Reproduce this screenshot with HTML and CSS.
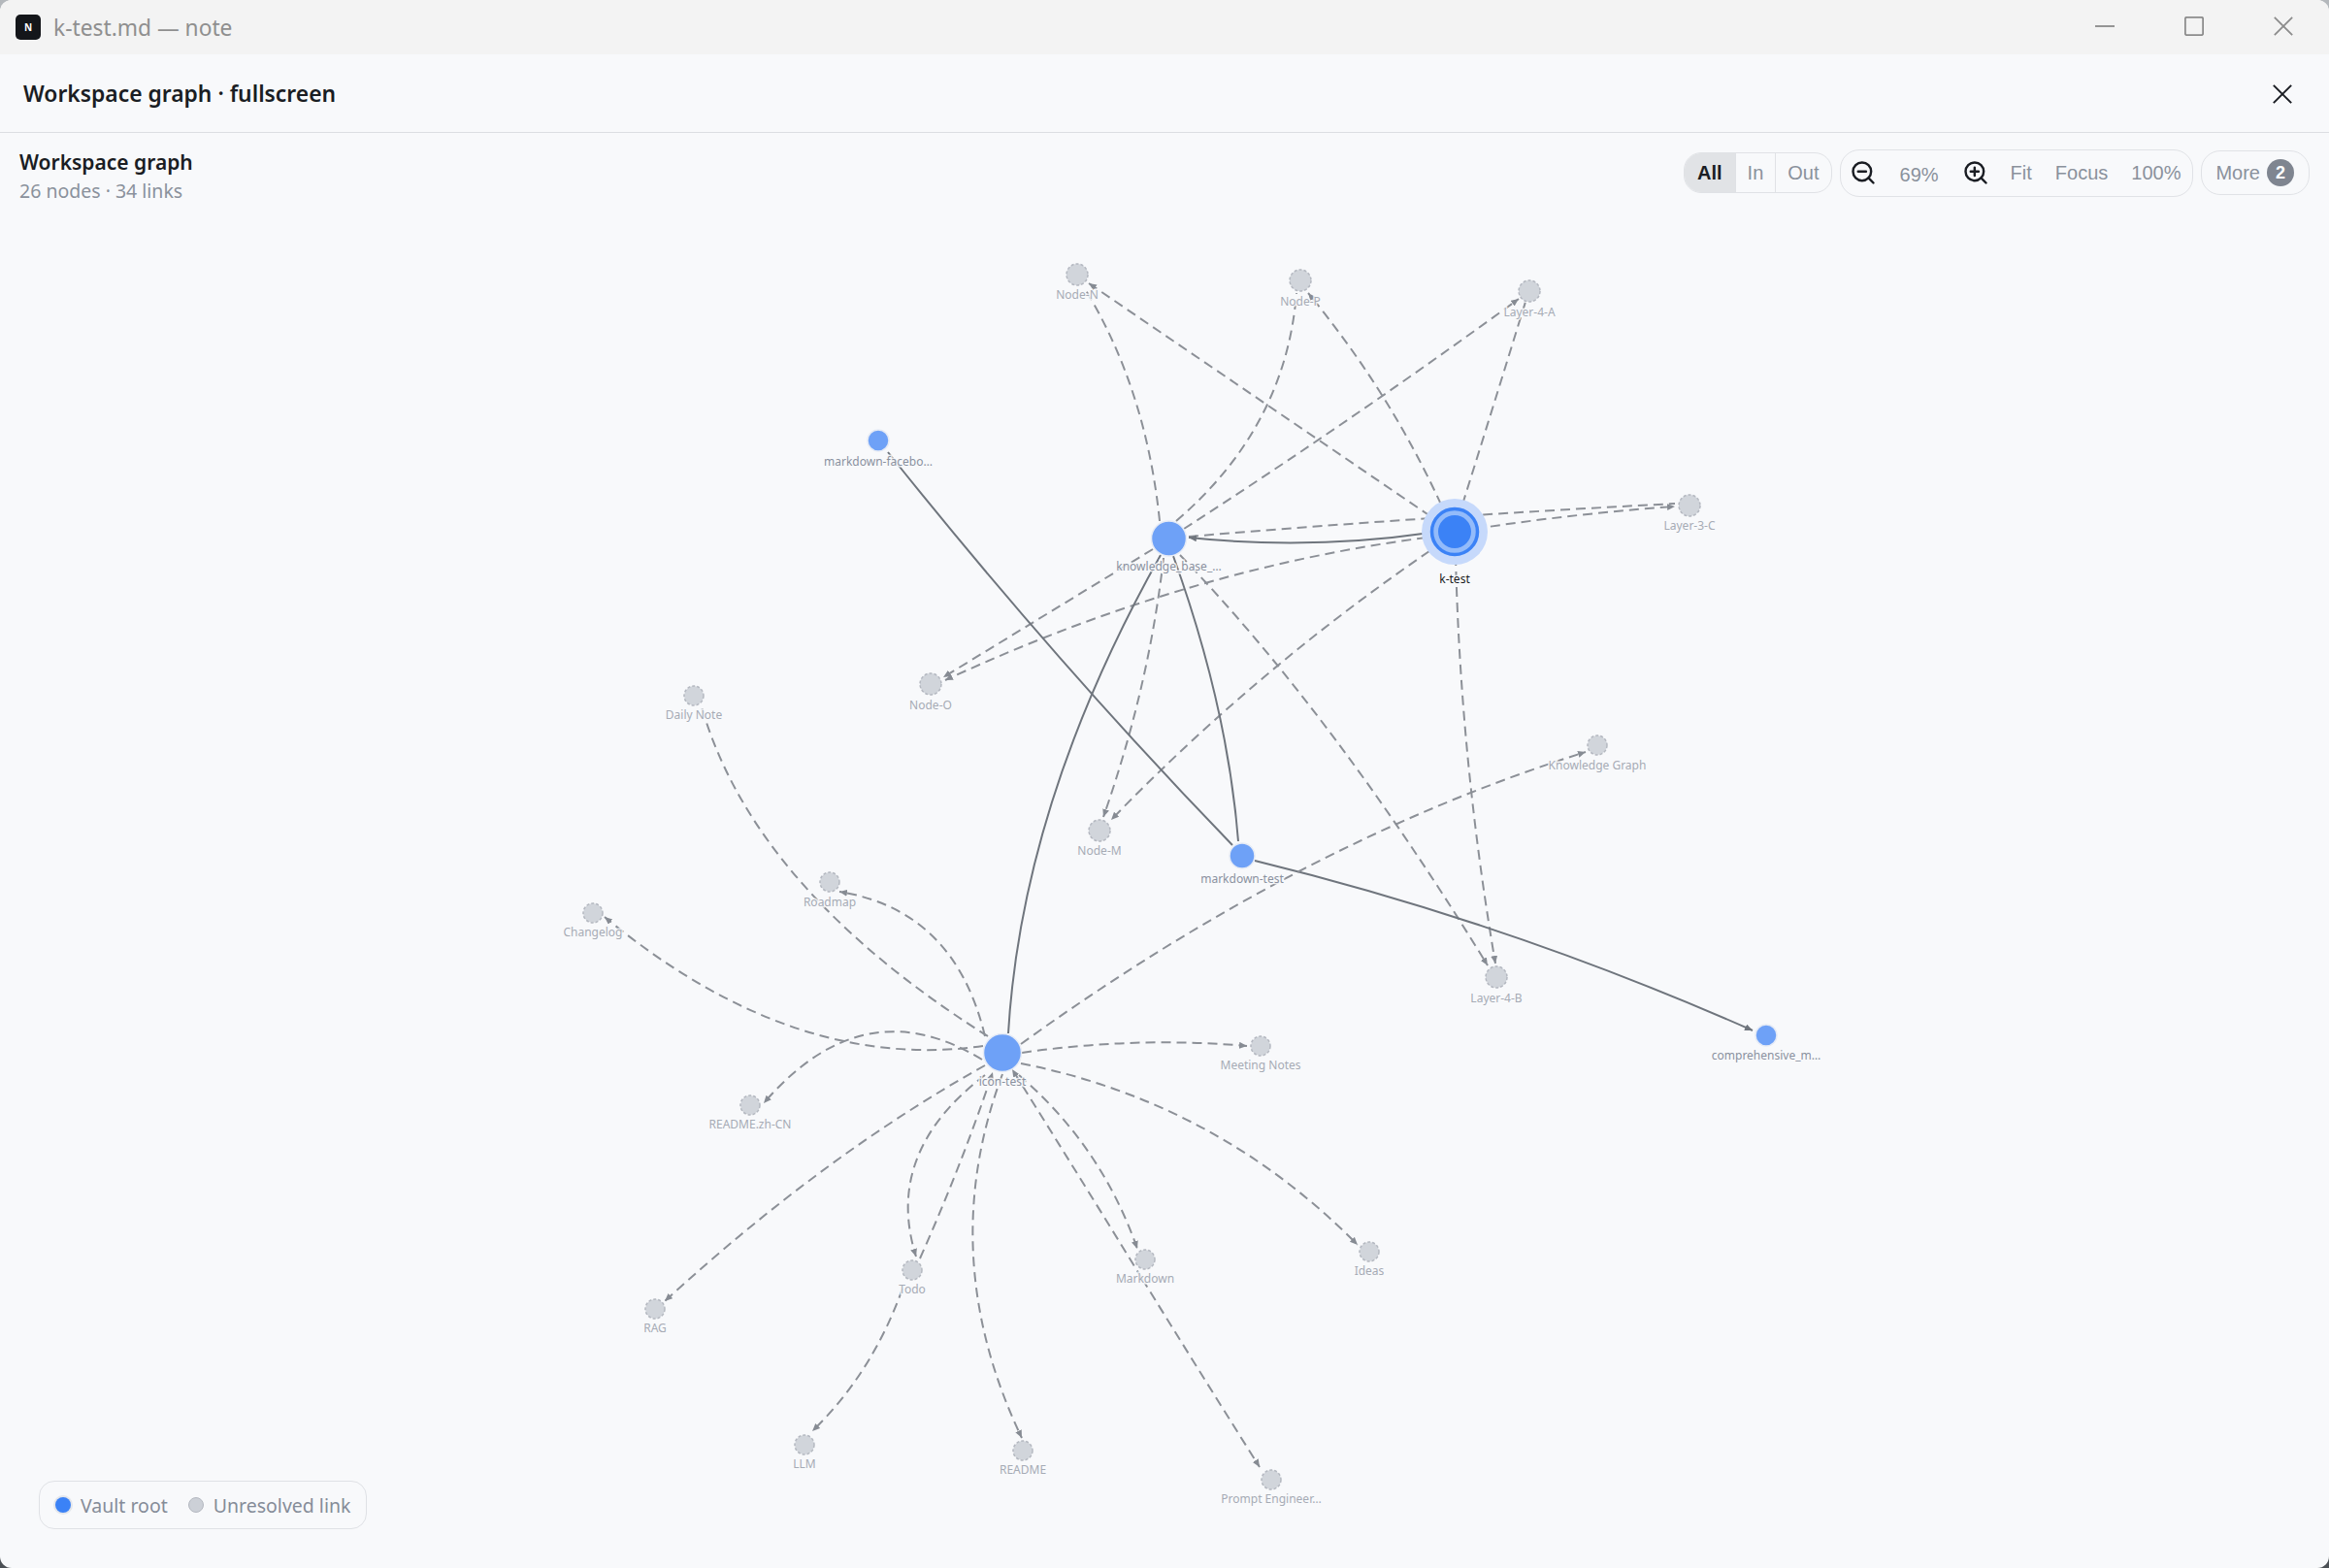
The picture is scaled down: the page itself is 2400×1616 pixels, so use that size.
FILE: index.html
```html
<!DOCTYPE html>
<html lang="en">
  <head>
    <meta charset="UTF-8" />
    <title>k-test.md — note</title>
    <link rel="stylesheet" href="styles.css">
  </head>
  <body>
    <div class="window">
      <div class="titlebar">
        <div class="app-logo">N</div>
        <div class="app-title">k-test.md — note</div>
        <div class="window-controls">
          <svg viewBox="0 0 24 24" class="win-icon"><path d="M0 12h24" /></svg>
          <svg viewBox="0 0 24 24" class="win-icon"><rect x="1" y="1" width="22" height="22" rx="2" /></svg>
          <svg viewBox="0 0 24 24" class="win-icon"><path d="M1 1l22 22M23 1L1 23" /></svg>
        </div>
      </div>

      <div class="dialog-header">
        <div class="dialog-title">Workspace graph · fullscreen</div>
        <svg viewBox="0 0 24 24" class="dialog-close"><path d="M1 1l22 22M23 1L1 23" /></svg>
      </div>

      <div class="graph-panel">
        <!-- canvas uses page coordinates, panel starts at y=137 -->
        <svg class="graph-canvas" viewBox="0 137 2400 1479">
          <defs>
            <marker id="arrow" markerUnits="userSpaceOnUse" markerWidth="10" markerHeight="8" refX="8" refY="3.5" orient="auto">
              <path d="M0 0L8 3.5L0 7z" fill="#868b93" />
            </marker>
            <marker id="arrow-solid" markerUnits="userSpaceOnUse" markerWidth="10" markerHeight="8" refX="8" refY="3.5" orient="auto">
              <path d="M0 0L8 3.5L0 7z" fill="#6f757d" />
            </marker>
          </defs>

          <!-- knowledge_base links -->
          <path class="link" d="M1195 537Q1181 400 1117 296" />
          <path class="link" d="M1212 537Q1325 440 1336 302" />
          <path class="link to" d="M1220 545Q1395 432 1565 308" />
          <path class="link" d="M1225 553Q1475 532 1726 519" />
          <path class="link to" d="M1188 566Q1080 632 972 698" />
          <path class="link to" d="M1199 575Q1184 708 1137 842" />
          <path class="link to" d="M1216 572Q1374 736 1533 995" />

          <!-- k-test links -->
          <path class="link to" d="M1474 532Q1298 412 1122 292" />
          <path class="link to" d="M1485 520Q1432 404 1348 302" />
          <path class="link" d="M1507 520Q1540 415 1572 311" />
          <path class="link to" d="M1520 545Q1625 529 1726 522" />
          <path class="link to" d="M1470 554Q1222 586 974 701" />
          <path class="link to" d="M1473 568Q1295 690 1145 845" />
          <path class="link to" d="M1500 573Q1505 783 1541 993" />

          <!-- resolved links -->
          <path class="link-solid to" d="M1474 549Q1350 567 1225 554" />
          <path class="link-solid" d="M915 466Q1089 684 1270 871" />
          <path class="link-solid" d="M1209 573Q1265 728 1276 867" />
          <path class="link-solid" d="M1039 1065Q1053 827 1196 572" />
          <path class="link-solid to" d="M1293 887Q1555 951 1806 1062" />

          <!-- icon-test links -->
          <path class="link to" d="M1052 1076Q1343 866 1634 775" />
          <path class="link" d="M1018 1068Q775 915 722 725" />
          <path class="link to" d="M1015 1068Q984 938 865 919" />
          <path class="link to" d="M1013 1078Q818 1106 623 945" />
          <path class="link to" d="M1012 1092Q890 1017 787 1137" />
          <path class="link to" d="M1053 1085Q1170 1068 1285 1078" />
          <path class="link to" d="M1052 1096Q1254 1136 1399 1283" />
          <path class="link to" d="M1015 1098Q850 1190 685 1341" />
          <path class="link to" d="M1015 1108Q910 1188 944 1295" />
          <path class="link to" d="M948 1297Q990 1203 1023 1105" />
          <path class="link to" d="M1033 1107Q963 1294 1053 1482" />
          <path class="link to" d="M1050 1108Q1135 1181 1172 1287" />
          <path class="link to" d="M1177 1318Q1112 1212 1043 1102" />
          <path class="link to" d="M1177 1318Q1237 1415 1298 1512" />
          <path class="link to" d="M930 1328Q899 1415 837 1475" />

          <!-- nodes -->
          <circle class="node-ghost" cx="1110" cy="283" r="11" />
          <circle class="node-ghost" cx="1340" cy="289" r="11" />
          <circle class="node-ghost" cx="1576" cy="300" r="11" />
          <circle class="node-ghost" cx="1741" cy="521" r="11" />
          <circle class="node-ghost" cx="959" cy="705" r="11" />
          <circle class="node-ghost" cx="1133" cy="856" r="11" />
          <circle class="node-ghost" cx="715" cy="717" r="10" />
          <circle class="node-ghost" cx="855" cy="909" r="10" />
          <circle class="node-ghost" cx="611" cy="941" r="10" />
          <circle class="node-ghost" cx="773" cy="1139" r="10" />
          <circle class="node-ghost" cx="675" cy="1349" r="10" />
          <circle class="node-ghost" cx="940" cy="1309" r="10" />
          <circle class="node-ghost" cx="829" cy="1489" r="10" />
          <circle class="node-ghost" cx="1054" cy="1495" r="10" />
          <circle class="node-ghost" cx="1310" cy="1525" r="10" />
          <circle class="node-ghost" cx="1180" cy="1298" r="10" />
          <circle class="node-ghost" cx="1299" cy="1078" r="10" />
          <circle class="node-ghost" cx="1411" cy="1290" r="10" />
          <circle class="node-ghost" cx="1542" cy="1007" r="11" />
          <circle class="node-ghost" cx="1646" cy="768" r="10" />

          <circle class="node-file" cx="905" cy="454" r="11" />
          <circle class="node-file" cx="1204.5" cy="555" r="18" />
          <circle class="node-file" cx="1280" cy="882" r="13" />
          <circle class="node-file" cx="1033" cy="1085" r="19.5" />
          <circle class="node-file" cx="1820" cy="1067" r="11" />

          <circle class="active-halo" cx="1499" cy="548" r="34" />
          <circle class="active-ring" cx="1499" cy="548" r="23.5" />
          <circle class="active-core" cx="1499" cy="548" r="17" />

          <!-- labels -->
          <text class="node-label" x="1110" y="308">Node-N</text>
          <text class="node-label" x="1340" y="315">Node-P</text>
          <text class="node-label" x="1576" y="326">Layer-4-A</text>
          <text class="node-label" x="1741" y="546">Layer-3-C</text>
          <text class="node-label" x="959" y="731">Node-O</text>
          <text class="node-label" x="1133" y="881">Node-M</text>
          <text class="node-label" x="715" y="741">Daily Note</text>
          <text class="node-label" x="855" y="934">Roadmap</text>
          <text class="node-label" x="611" y="965">Changelog</text>
          <text class="node-label" x="773" y="1163">README.zh-CN</text>
          <text class="node-label" x="675" y="1373">RAG</text>
          <text class="node-label" x="940" y="1333">Todo</text>
          <text class="node-label" x="829" y="1513">LLM</text>
          <text class="node-label" x="1054" y="1519">README</text>
          <text class="node-label" x="1310" y="1549">Prompt Engineer…</text>
          <text class="node-label" x="1180" y="1322">Markdown</text>
          <text class="node-label" x="1299" y="1102">Meeting Notes</text>
          <text class="node-label" x="1411" y="1314">Ideas</text>
          <text class="node-label" x="1542" y="1033">Layer-4-B</text>
          <text class="node-label" x="1646" y="793">Knowledge Graph</text>
          <text class="node-label file" x="905" y="480">markdown-facebo…</text>
          <text class="node-label file" x="1204.5" y="588">knowledge_base_…</text>
          <text class="node-label file" x="1280" y="910">markdown-test</text>
          <text class="node-label file" x="1033" y="1119">icon-test</text>
          <text class="node-label file" x="1820" y="1092">comprehensive_m…</text>
          <text class="node-label current" x="1499" y="601">k-test</text>
        </svg>

        <div class="panel-head">
          <div>
            <div class="panel-title">Workspace graph</div>
            <div class="panel-stats">26 nodes · 34 links</div>
          </div>
          <div class="toolbar">
            <div class="pill seg">
              <span class="seg-item active">All</span>
              <span class="seg-item">In</span>
              <span class="seg-item">Out</span>
            </div>
            <div class="pill zoom-tools">
              <svg viewBox="0 0 24 24" class="zoom-icon"><circle cx="11" cy="11" r="8" /><path d="M21 21l-4.3-4.3M7.5 11h7" /></svg>
              <span class="zoom-value">69%</span>
              <svg viewBox="0 0 24 24" class="zoom-icon zoom-in"><circle cx="11" cy="11" r="8" /><path d="M21 21l-4.3-4.3M7.5 11h7M11 7.5v7" /></svg>
              <span>Fit</span>
              <span>Focus</span>
              <span>100%</span>
            </div>
            <div class="pill more">
              <span>More</span>
              <span class="badge">2</span>
            </div>
          </div>
        </div>

        <div class="legend">
          <span class="legend-dot root"></span>
          <span class="legend-text">Vault root</span>
          <span class="legend-dot ghost"></span>
          <span class="legend-text">Unresolved link</span>
        </div>
      </div>
    </div>
  </body>
</html>
```

FILE: styles.css
```css
* {
  margin: 0;
  padding: 0;
  box-sizing: border-box;
}

body {
  height: 100vh;
  overflow: hidden;
  background: linear-gradient(180deg, #b4b8bc 0%, #4b5055 100%);
  font-family: "Noto Sans", sans-serif;
}

.window {
  height: 100%;
  display: flex;
  flex-direction: column;
  background: #f8f9fb;
  border-radius: 12px;
  overflow: hidden;
}

/* Title bar */
.titlebar {
  height: 56px;
  flex-shrink: 0;
  display: flex;
  align-items: center;
  padding-left: 16px;
  background: #f3f3f3;
}

.app-logo {
  width: 26px;
  height: 26px;
  border-radius: 5px;
  background: #14161a;
  color: #ffffff;
  font-size: 10px;
  font-weight: 700;
  line-height: 26px;
  text-align: center;
}

.app-title {
  margin-left: 13px;
  font-size: 22.75px;
  color: #8f8f8f;
}

.window-controls {
  margin-left: auto;
  margin-right: 37px;
  margin-bottom: 2px;
  display: flex;
  gap: 72px;
}

.win-icon {
  width: 20px;
  height: 20px;
  fill: none;
  stroke: #8c8c8c;
  stroke-width: 2.2;
}

/* Dialog header */
.dialog-header {
  height: 81px;
  flex-shrink: 0;
  display: flex;
  align-items: center;
  justify-content: space-between;
  padding: 1px 38px 0 24px;
  border-bottom: 1px solid #dcdee2;
}

.dialog-title {
  font-size: 22.85px;
  font-weight: 600;
  color: #1a1d23;
}

.dialog-close {
  width: 20px;
  height: 20px;
  fill: none;
  stroke: #1a1d23;
  stroke-width: 2.4;
}

/* Graph panel */
.graph-panel {
  position: relative;
  flex: 1;
}

.graph-canvas {
  position: absolute;
  top: 0;
  left: 0;
  width: 2400px;
  height: 1479px;
}

.panel-head {
  position: relative;
  display: flex;
  justify-content: space-between;
  padding: 16px 20px 0;
}

.panel-title {
  font-size: 21px;
  line-height: 29px;
  font-weight: 600;
  color: #1a1d23;
}

.panel-stats {
  font-size: 19.5px;
  line-height: 29px;
  color: #8a919c;
}

.toolbar {
  display: flex;
  align-items: center;
  gap: 8px;
  align-self: flex-start;
  height: 50px;
  font-family: "Liberation Sans", sans-serif;
  font-size: 20px;
  color: #8a919c;
}

.pill {
  display: flex;
  align-items: center;
  border: 1.5px solid #e0e2e6;
  background: #f8f9fb;
}

.seg {
  height: 42px;
  border-radius: 18px;
  overflow: hidden;
}

.seg-item {
  height: 100%;
  display: flex;
  align-items: center;
  padding: 0 12px;
  border-left: 1.5px solid #e0e2e6;
}

.seg-item.active {
  padding: 0 13px;
  border-left: 0;
  background: #e1e3e6;
  color: #1a1d23;
  font-weight: 700;
}

.zoom-tools {
  height: 49px;
  gap: 24px;
  padding: 0 12px 0 9px;
  border-radius: 20px;
}

.zoom-value {
  padding-top: 4px;
}

.zoom-icon {
  width: 28px;
  height: 28px;
  fill: none;
  stroke: #1a1d23;
  stroke-width: 2.1;
  stroke-linecap: round;
}

.zoom-in {
  margin-right: -2px;
}

.more {
  height: 46px;
  gap: 7px;
  padding: 0 15px 0 14px;
  border-radius: 20px;
}

.badge {
  width: 28px;
  height: 28px;
  border-radius: 50%;
  background: #7f8590;
  color: #ffffff;
  font-size: 18px;
  font-weight: 700;
  line-height: 28px;
  text-align: center;
}

/* Graph parts */
.link,
.link-solid {
  fill: none;
  stroke-width: 2;
}

.link {
  stroke: #8c9097;
  stroke-dasharray: 10 6;
}

.link-solid {
  stroke: #6f757d;
}

.link.to {
  marker-end: url(#arrow);
}

.link-solid.to {
  marker-end: url(#arrow-solid);
}

.node-file {
  fill: #6ea1f7;
  stroke: #e6ebf5;
  stroke-width: 1.5;
}

.node-ghost {
  fill: #d1d5db;
  stroke: #b4b8c0;
  stroke-width: 1.5;
  stroke-dasharray: 3 2;
}

.active-halo {
  fill: #c6d9fb;
}

.active-ring {
  fill: #93bbfa;
  stroke: #3b82f6;
  stroke-width: 3.5;
}

.active-core {
  fill: #3b82f6;
}

.node-label {
  font-size: 12px;
  text-anchor: middle;
  fill: #a6abb5;
  stroke: #f8f9fb;
  stroke-width: 3;
  stroke-opacity: 0.85;
  paint-order: stroke;
}

.node-label.file {
  fill: #8a919f;
}

.node-label.current {
  fill: #1a1d23;
}

/* Legend */
.legend {
  position: absolute;
  left: 40px;
  bottom: 40px;
  height: 50px;
  display: flex;
  align-items: center;
  padding: 0 16px;
  border: 1.5px solid #dfe1e5;
  border-radius: 16px;
  background: #f8f9fb;
  font-size: 19.5px;
  color: #858c98;
}

.legend-dot {
  width: 16px;
  height: 16px;
  border-radius: 50%;
}

.legend-dot.root {
  background: #3b82f6;
  box-shadow: 0 0 0 2px #e3e6ec;
}

.legend-dot.ghost {
  margin-left: 21px;
  background: #ccd0d7;
  border: 1.5px solid #b4b8c0;
}

.legend-text {
  margin-left: 10px;
}
```
